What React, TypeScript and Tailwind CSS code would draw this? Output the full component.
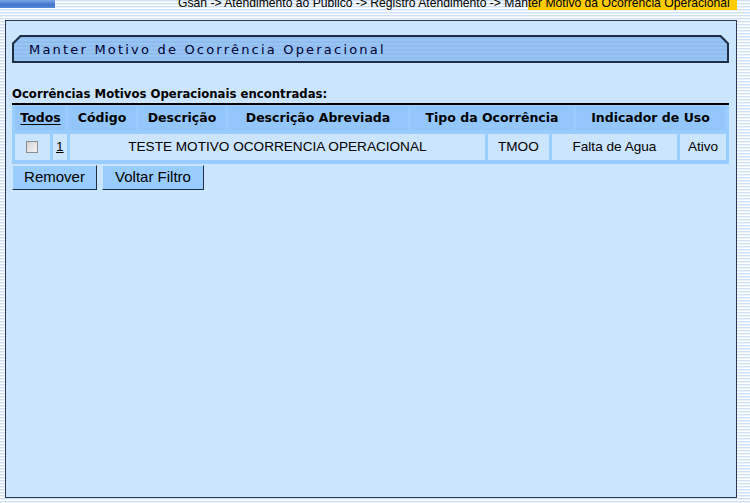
import React from "react";

const headers = [
  { label: "Todos", w: "w-[51px]", underline: true },
  { label: "Código", w: "w-[68px]" },
  { label: "Descrição", w: "w-[88px]" },
  { label: "Descrição Abreviada", w: "w-[180px]" },
  { label: "Tipo da Ocorrência", w: "w-[164px]" },
  { label: "Indicador de Uso", w: "w-[149px]" },
];

export default function App() {
  return (
    <div className="relative h-[503px] w-[750px] overflow-hidden bg-[repeating-linear-gradient(to_bottom,#cfe2f5_0px,#cfe2f5_1px,#eaf2fb_1px,#eaf2fb_2px,#ffffff_2px,#ffffff_3px)] font-['Liberation_Sans',Arial,sans-serif]">
      {/* top strip */}
      <div className="flex h-[11px] items-start">
        <div className="h-[8px] w-[55px] bg-[linear-gradient(to_bottom,#7aa6e6,#3f72cc_60%,#5a8bd8)]" />
        <div className="ml-[123px] -mt-[3px] flex whitespace-nowrap text-[12.15px] leading-[13px] text-black">
          <span>Gsan -&gt; Atendimento ao Público -&gt; Registro Atendimento -&gt; Man</span>
          <span className="bg-[#ffcc00] pr-[7px]">ter Motivo da Ocorrência Operacional</span>
        </div>
      </div>

      {/* main panel */}
      <div className="ml-[5px] mt-[9px] h-[478px] w-[732px] border border-[#2a3a55] bg-[#cce5fe] px-[6px] pt-[14px]">
        {/* title tab */}
        <div className="h-[28px] w-[717px] bg-[#1f2d45] [clip-path:polygon(8px_0,calc(100%-8px)_0,100%_8px,100%_100%,0_100%,0_8px)] p-[2px]">
          <div className="flex h-full items-center bg-[repeating-linear-gradient(to_bottom,#8fbdf0_0px,#8fbdf0_2px,#99c5f4_2px,#99c5f4_4px)] pl-[15px] [clip-path:polygon(7px_0,calc(100%-7px)_0,100%_7px,100%_100%,0_100%,0_7px)]">
            <span className="mt-[1px] font-['DejaVu_Sans',Verdana,sans-serif] text-[13px] tracking-[2.2px] text-[#000033]">
              Manter Motivo de Ocorrência Operacional
            </span>
          </div>
        </div>

        <div className="mt-[24px] font-['DejaVu_Sans',Verdana,sans-serif] text-[11.7px] font-bold leading-[14px] text-black">
          Ocorrências Motivos Operacionais encontradas:
        </div>

        {/* table */}
        <div className="mt-[2px] w-[717px] border-t-2 border-black bg-[#99ccff] px-[3px] pb-[4px] pt-[1px]">
          <div className="flex gap-[2px] font-['DejaVu_Sans',Verdana,sans-serif] text-[12.5px] font-bold">
            {headers.map((h) => (
              <div
                key={h.label}
                className={`${h.w} flex h-[24px] items-center justify-center bg-[#93c7fb] ${h.underline ? "underline underline-offset-2" : ""}`}
              >
                {h.label}
              </div>
            ))}
          </div>
          <div className="mt-[4px] flex gap-[3px] text-[13.6px] text-black">
            <div className="flex h-[26px] w-[35px] items-center justify-center bg-[#cce5ff]">
              <div className="h-[12px] w-[12px] border border-[#8c8c8c] bg-[linear-gradient(135deg,#d4d4d4,#f4f4f4)]" />
            </div>
            <div className="flex h-[26px] w-[14px] items-center justify-center bg-[#cce5ff] underline">1</div>
            <div className="flex h-[26px] w-[417px] items-center justify-center bg-[#cce5ff]">
              TESTE MOTIVO OCORRENCIA OPERACIONAL
            </div>
            <div className="flex h-[26px] w-[61px] items-center justify-center bg-[#cce5ff]">TMOO</div>
            <div className="flex h-[26px] w-[126px] items-center justify-center bg-[#cce5ff]">Falta de Agua</div>
            <div className="flex h-[26px] w-[46px] items-center justify-center bg-[#cce5ff]">Ativo</div>
          </div>
        </div>

        <div className="mt-[1px] flex gap-[5px] text-[15px] text-black">
          <button className="h-[25px] w-[85px] border border-b-[#1f2d45] border-l-[#cde6ff] border-r-[#1f2d45] border-t-[#cde6ff] bg-[#99ccff]">
            Remover
          </button>
          <button className="h-[25px] w-[102px] border border-b-[#1f2d45] border-l-[#cde6ff] border-r-[#1f2d45] border-t-[#cde6ff] bg-[#99ccff]">
            Voltar Filtro
          </button>
        </div>
      </div>
    </div>
  );
}
